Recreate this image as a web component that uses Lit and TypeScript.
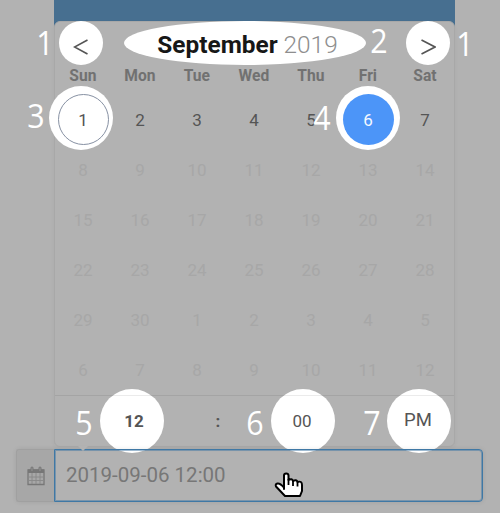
import { LitElement, html, css } from "lit";
import { customElement } from "lit/decorators.js";
import { classMap } from "lit/directives/class-map.js";
import { styleMap } from "lit/directives/style-map.js";

const weekdays = ["Sun", "Mon", "Tue", "Wed", "Thu", "Fri", "Sat"];
const days = [
  ...Array.from({ length: 30 }, (_, i) => i + 1),
  ...Array.from({ length: 12 }, (_, i) => i + 1),
];

// Highlighted areas: centre x, centre y, radius x, radius y
const spots = [
  [81, 43, 22, 22],
  [245, 43, 121, 22],
  [428, 43, 22, 22],
  [81, 118, 32, 32],
  [368, 118, 32, 32],
  [132, 421, 32, 32],
  [303, 421, 32, 32],
  [419, 421, 32, 32],
];

// Callout numbers: label, centre x, centre y
const callouts: [string, number, number][] = [
  ["1", 45, 43],
  ["2", 378.5, 41],
  ["1", 465, 44],
  ["3", 35.5, 116],
  ["4", 321.5, 118],
  ["5", 83.5, 423],
  ["6", 255, 423],
  ["7", 371.5, 423],
];

@customElement("app-root")
export class AppRoot extends LitElement {
  static styles = css`
    :host {
      display: block;
      position: relative;
      box-sizing: border-box;
      width: 500px;
      height: 513px;
      overflow: hidden;
      background: #b2b2b2;
      font-family: Roboto, sans-serif;
      color: #555;
    }
    .banner {
      height: 27px;
      width: 401px;
      margin-left: 54px;
      background: #476f90;
    }
    .calendar {
      box-sizing: border-box;
      width: 401px;
      height: 426px;
      margin: -6px 0 0 54px;
      border: 1px solid #a8a8a8;
      border-radius: 6px;
      background: #b2b2b2;
      box-shadow: 0 2px 4px rgba(0, 0, 0, 0.04);
    }
    .month, .weekdays, .grid, .time { position: relative; z-index: 2; }
    .month {
      display: flex;
      justify-content: space-between;
      height: 44px;
      align-items: center;
      padding: 0 18px;
    }
    .title {
      font-size: 24.4px;
      line-height: 44px;
      color: #8e8e8e;
      font-weight: 300;
      padding-top: 1px;
      margin-right: 14px;
      white-space: nowrap;
    }
    .title b { color: #171717; font-weight: 700; }
    .arrow { width: 16px; height: 16px; margin-top: 5px; }
    .arrow path { fill: none; stroke: #555; stroke-width: 1.6; }
    .weekdays, .grid {
      display: grid;
      grid-template-columns: repeat(7, 57px);
      text-align: center;
    }
    .weekdays {
      font-size: 15.6px;
      font-weight: 700;
      line-height: 20px;
      color: #717171;
      height: 20px;
      margin-left: -0.6px;
    }
    .grid { grid-auto-rows: 50px; margin-top: 8px; }
    .day {
      display: flex;
      align-items: center;
      justify-content: center;
      font-size: 17px;
      color: #555;
    }
    .day span {
      box-sizing: border-box;
      width: 51px;
      height: 51px;
      line-height: 52px;
      text-indent: -1px;
      flex: none;
      border-radius: 50%;
    }
    .today span { border: 1px solid #8791a3; line-height: 50px; }
    .selected span { background: #4c95f8; color: #f5f9ff; }
    .muted { color: #a7a7a7; }
    .time {
      display: grid;
      grid-template-columns: 160px 8px 160px 72px;
      height: 49px;
      line-height: 51px;
      border-top: 1px solid rgba(0, 0, 0, 0.08);
      text-align: center;
      font-size: 17px;
      color: #555;
      margin-top: 1px;
    }
    .bold { font-weight: 700; }
    .time > div { margin-left: -2px; }
    .ampm { line-height: 48px; font-size: 18.5px; }
    .field {
      display: flex;
      position: relative;
      z-index: 2;
      box-sizing: border-box;
      width: 467px;
      height: 53px;
      margin: 2px 0 0 16px;
      border-radius: 4px;
      box-shadow: 0 0 5px rgba(0, 0, 0, 0.09);
    }
    .addon {
      box-sizing: border-box;
      width: 38px;
      display: flex;
      align-items: center;
      justify-content: center;
      border: 1px solid #a0a0a0;
      border-right: 0;
      border-radius: 3px 0 0 3px;
      background: #a7a7a7;
    }
    .input {
      box-sizing: border-box;
      flex: 1;
      border: 1px solid #3f78a5;
      box-shadow: inset 0 0 0 1px rgba(63, 120, 165, 0.5);
      border-radius: 0 4px 4px 0;
      padding-left: 11px;
      font-size: 20.5px;
      line-height: 50px;
      color: #777;
      font-weight: 400;
    }
    .spot {
      position: absolute;
      z-index: 1;
      border-radius: 50%;
      background: #fff;
      transform: translate(-50%, -50%);
    }
    .callout {
      position: absolute;
      z-index: 3;
      color: #fff;
      font: 400 33px/40px "Open Sans", "Noto Sans", sans-serif;
      transform: translate(-50%, -50%) scaleX(0.92);
    }
    .notch {
      position: absolute;
      z-index: 3;
      left: 78px;
      top: 446px;
      border: 5px solid transparent;
      border-top-color: #b2b2b2;
      border-bottom: 0;
    }
    .pointer { position: absolute; z-index: 4; left: 273px; top: 470px; }
  `;

  private renderDay(day: number, index: number) {
    const classes = {
      day: true,
      muted: index > 6,
      today: index === 0,
      selected: index === 5,
    };
    return html`<div class=${classMap(classes)}><span>${day}</span></div>`;
  }

  render() {
    return html`
      <div class="banner"></div>
      <div class="calendar">
        <div class="month">
          <svg class="arrow" viewBox="0 0 16 16"><path d="M14.500 1 1.500 8 14.500 15" /></svg>
          <div class="title"><b>September</b> 2019</div>
          <svg class="arrow" viewBox="0 0 16 16"><path d="M1.500 1 15 8 1.500 15" /></svg>
        </div>
        <div class="weekdays">${weekdays.map((d) => html`<div>${d}</div>`)}</div>
        <div class="grid">${days.map((d, i) => this.renderDay(d, i))}</div>
        <div class="time">
          <div class="bold">12</div><div class="bold">:</div>
          <div>00</div><div class="ampm">PM</div>
        </div>
      </div>
      <div class="field">
        <div class="addon">
          <svg width="18" height="20" viewBox="0 0 18 20">
            <path d="M1 4h16v14.500H1z" fill="none" stroke="#777" stroke-width="1.300" />
            <path d="M1 3.500h16v3.500H1z" fill="#777" />
            <path d="M5 7v11M9 7v11M13 7v11M1 11h16M1 14.500h16" stroke="#888" stroke-width=".9" />
            <path d="M5 2v3M13 2v3" stroke="#777" stroke-width="3" stroke-linecap="round" />
            <path d="M5 1.500v3.500M13 1.500v3.500" stroke="#999" stroke-width=".8" />
          </svg>
        </div>
        <div class="input">2019-09-06 12:00</div>
      </div>
      ${spots.map(([x, y, rx, ry]) => html`<div class="spot" style=${styleMap({
        left: `${x}px`, top: `${y}px`, width: `${rx * 2}px`, height: `${ry * 2}px`,
      })}></div>`)}
      ${callouts.map(([label, x, y]) => html`<div class="callout" style=${styleMap({
        left: `${x}px`, top: `${y}px`,
      })}>${label}</div>`)}
      <div class="notch"></div>
      <svg class="pointer" width="32" height="30" viewBox="0 0 32 30">
        <path d="M11 19V5.500Q11 3.500 13.200 3.500T15.500 5.500V10Q19 8 20 11Q23.500 9 24.500 12Q29 10.500 29 15V21L27 26H12L3 16.500Q2 14 4.500 13.500Q7 13 11 17.500Z"
          fill="#fff" stroke="#000" stroke-width="2" stroke-linejoin="round" />
        <path d="M15.500 9v6M20 10v6M24.500 11.500v5" stroke="#000" stroke-width="1.800" />
      </svg>
    `;
  }
}
